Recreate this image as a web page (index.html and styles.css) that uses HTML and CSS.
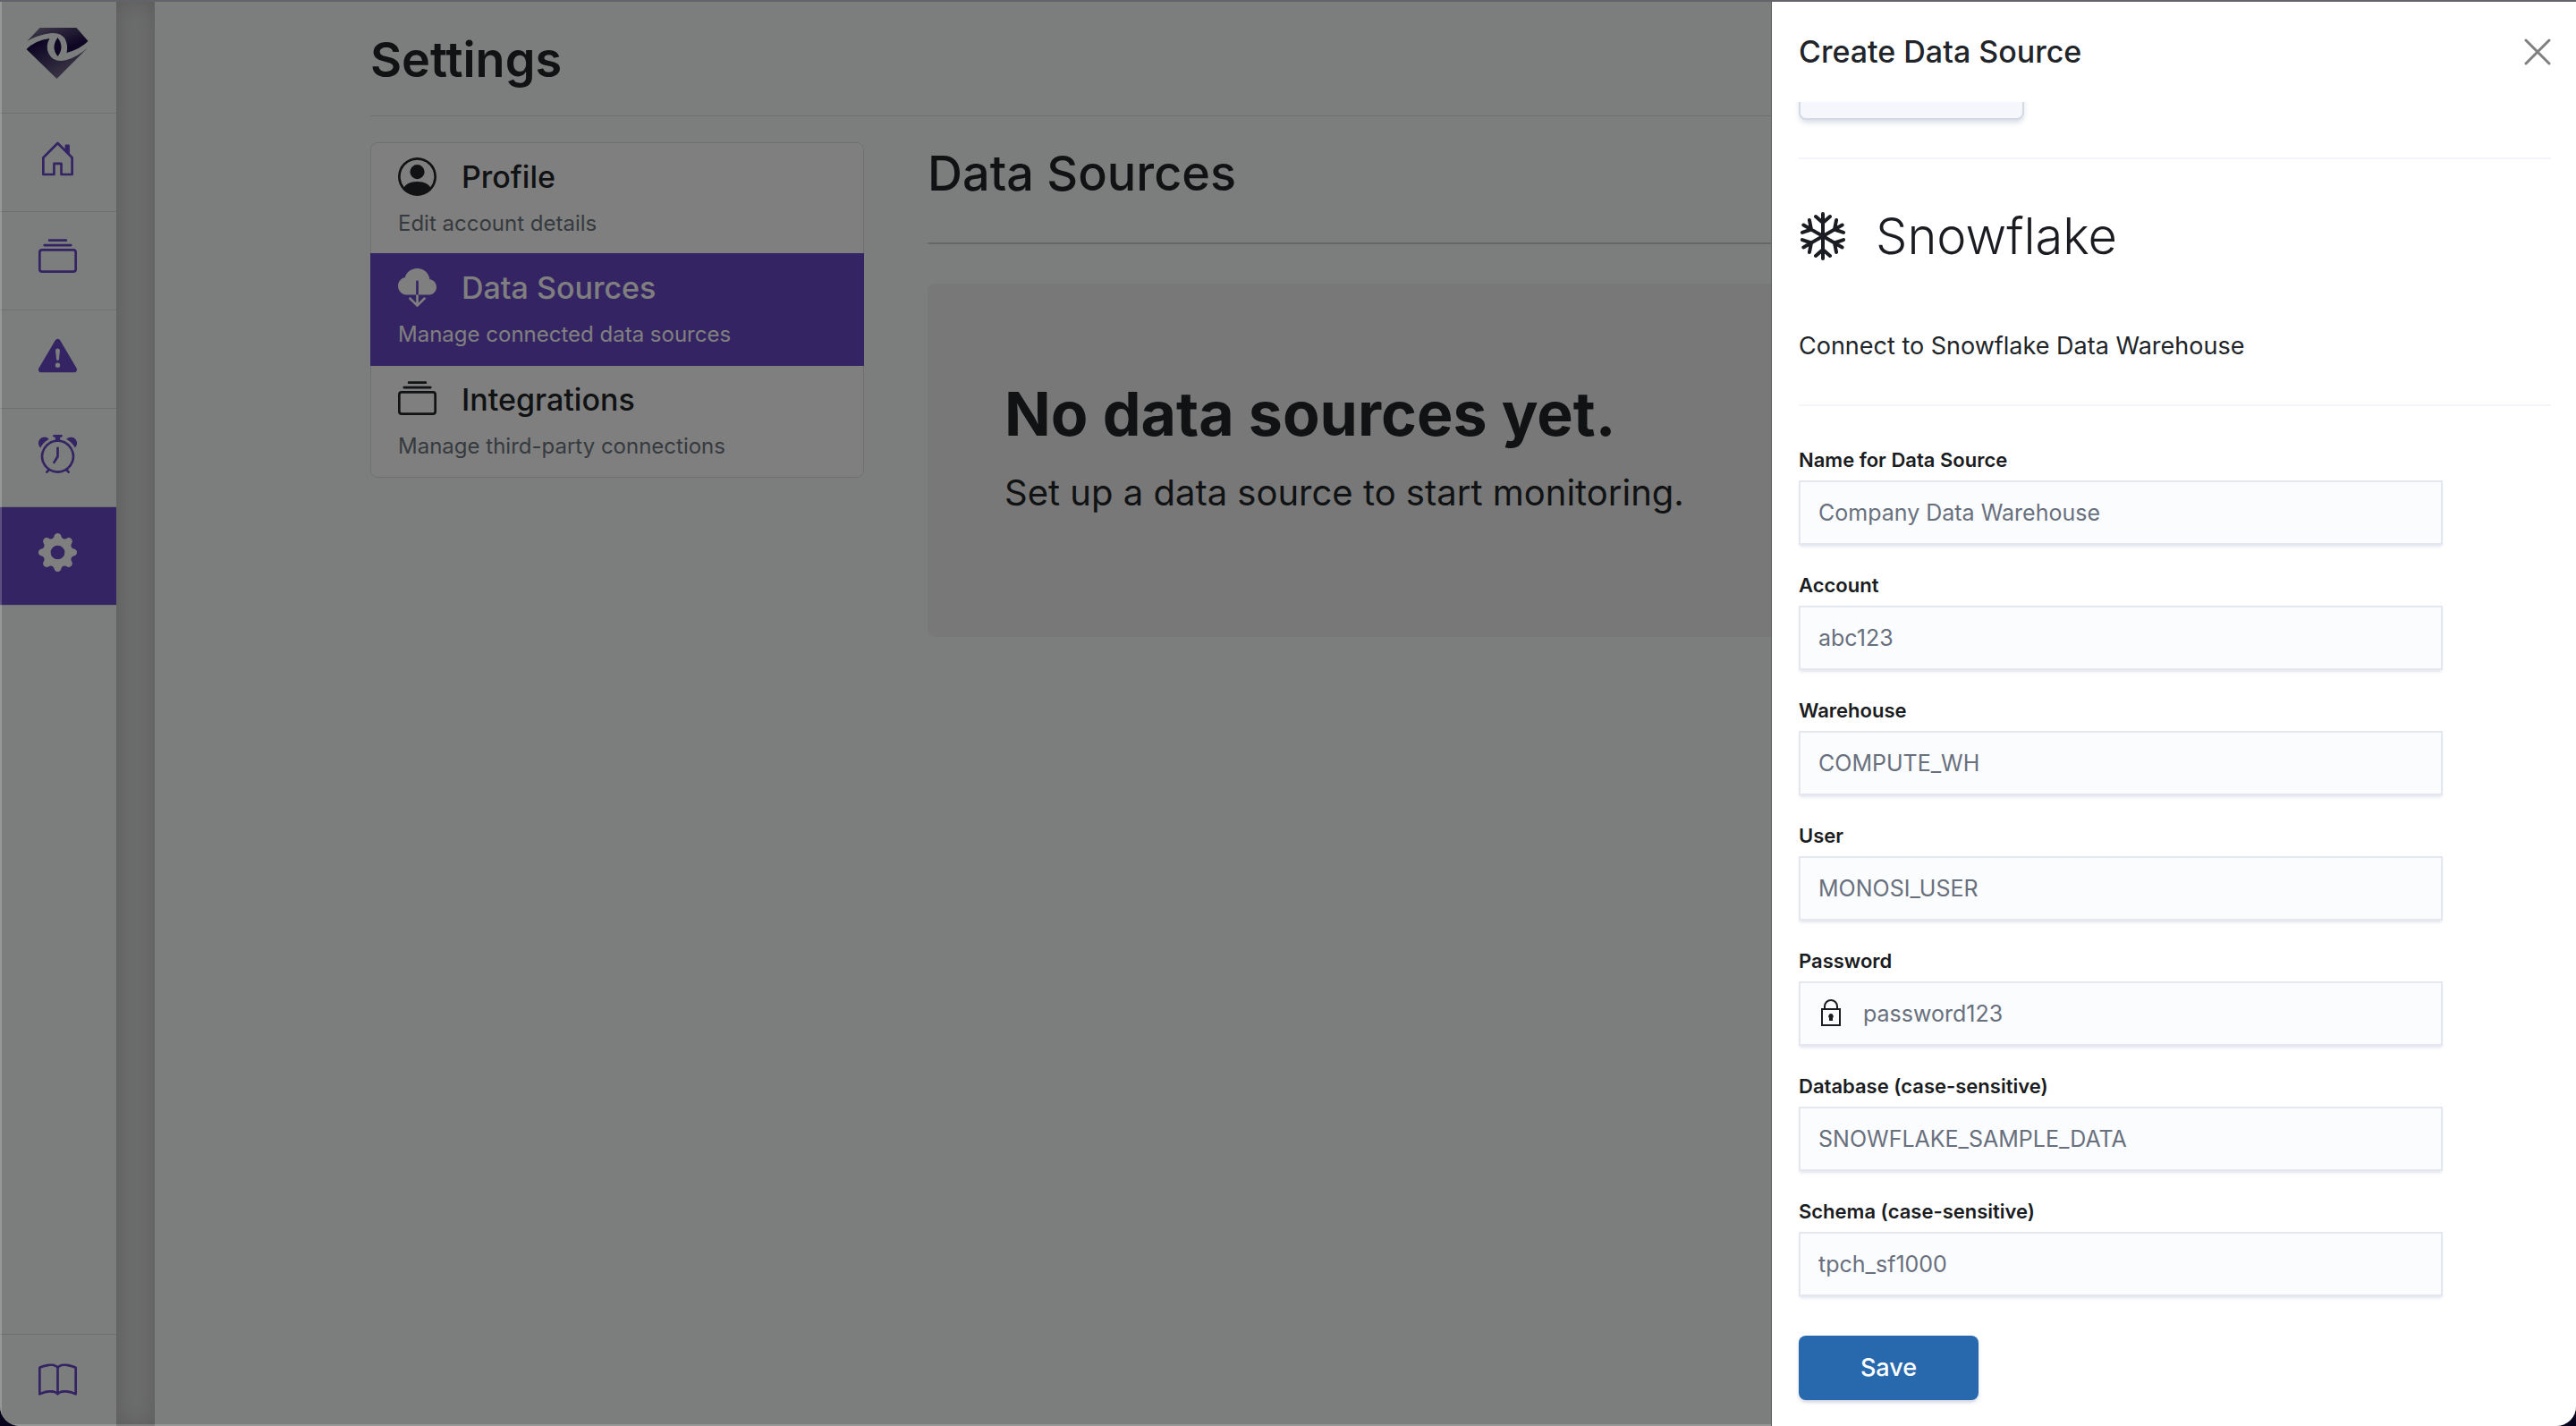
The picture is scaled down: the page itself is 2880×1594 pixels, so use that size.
FILE: index.html
```html
<!DOCTYPE html>
<html lang="en">
<head>
<meta charset="utf-8">
<title>Settings</title>
<link rel="stylesheet" href="styles.css">
</head>
<body>
<svg class="sprite" aria-hidden="true">
  <symbol id="collection" viewBox="0 0 16 16"><path d="M2.5 3.5a.5.5 0 0 1 0-1h11a.5.5 0 0 1 0 1h-11zm2-2a.5.5 0 0 1 0-1h7a.5.5 0 0 1 0 1h-7zM0 13a1.5 1.5 0 0 0 1.5 1.5h13A1.5 1.5 0 0 0 16 13V6a1.5 1.5 0 0 0-1.5-1.5h-13A1.5 1.5 0 0 0 0 6v7zm1.5.5A.5.5 0 0 1 1 13V6a.5.5 0 0 1 .5-.5h13a.5.5 0 0 1 .5.5v7a.5.5 0 0 1-.5.5h-13z"/></symbol>
</svg>
<div class="window">
  <nav class="sidebar" aria-label="Main">
    <a class="logo" href="#" aria-label="Home page">
      <svg viewBox="0 0 70 57">
        <defs>
          <linearGradient id="gem-top" x1="0" y1="0" x2="1" y2="1"><stop offset="0" stop-color="#8a8098"/><stop offset=".3" stop-color="#5a4d78"/><stop offset=".75" stop-color="#1c0d48"/></linearGradient>
          <linearGradient id="gem-bottom" x1="0" y1="0" x2="1" y2="1"><stop offset=".15" stop-color="#1c0d48"/><stop offset=".5" stop-color="#4f4270"/><stop offset=".85" stop-color="#80758f"/></linearGradient>
        </defs>
        <path fill="url(#gem-top)" d="M15 0H56L69 15Q60 24 45 28Q47 20 43 12Q38 5 28 6Q12 8 1 15Z"/>
        <path fill="url(#gem-bottom)" d="M0 24Q10 14 26 12Q21 20 25 29Q31 40 45 36Q58 32 69 22L34 57Z"/>
        <path fill="#1c0d48" d="M35 11Q43 22 35 32Q27 22 35 11Z"/>
      </svg>
    </a>
    <a class="nav-item" href="#" aria-label="Home"><svg class="icon" viewBox="0 0 16 16"><path d="M8.354 1.146a.5.5 0 0 0-.708 0l-6 6A.5.5 0 0 0 1.5 7.5v7a.5.5 0 0 0 .5.5h4.5a.5.5 0 0 0 .5-.5v-4h2v4a.5.5 0 0 0 .5.5H14a.5.5 0 0 0 .5-.5v-7a.5.5 0 0 0-.146-.354L13 5.793V2.5a.5.5 0 0 0-.5-.5h-1a.5.5 0 0 0-.5.5v1.293L8.354 1.146zM2.5 14V7.707l5.5-5.5 5.5 5.5V14H10v-4a.5.5 0 0 0-.5-.5h-3a.5.5 0 0 0-.5.5v4H2.5z"/></svg></a>
    <a class="nav-item" href="#" aria-label="Monitors"><svg class="icon"><use href="#collection"/></svg></a>
    <a class="nav-item" href="#" aria-label="Issues"><svg class="icon" viewBox="0 0 16 16"><path d="M8.982 1.566a1.13 1.13 0 0 0-1.96 0L.165 13.233c-.457.778.091 1.767.98 1.767h13.713c.889 0 1.438-.99.98-1.767L8.982 1.566zM8 5c.535 0 .954.462.9.995l-.35 3.507a.552.552 0 0 1-1.1 0L7.1 5.995A.905.905 0 0 1 8 5zm.002 6a1 1 0 1 1 0 2 1 1 0 0 1 0-2z"/></svg></a>
    <a class="nav-item" href="#" aria-label="Schedules"><svg class="icon" viewBox="0 0 16 16"><path d="M8.5 5.5a.5.5 0 0 0-1 0v3.362l-1.429 2.38a.5.5 0 1 0 .858.515l1.5-2.5A.5.5 0 0 0 8.5 9V5.5z"/><path d="M6.5 0a.5.5 0 0 0 0 1H7v1.07a7.001 7.001 0 0 0-3.273 12.474l-.602.602a.5.5 0 0 0 .707.708l.746-.746A6.97 6.97 0 0 0 8 16a6.97 6.97 0 0 0 3.422-.892l.746.746a.5.5 0 0 0 .707-.708l-.601-.602A7.001 7.001 0 0 0 9 2.07V1h.5a.5.5 0 0 0 0-1h-3zm1.038 3.018a6.093 6.093 0 0 1 .924 0 6 6 0 1 1-.924 0zM0 3.5c0 .753.333 1.429.86 1.887A8.035 8.035 0 0 1 4.387 1.86 2.5 2.5 0 0 0 0 3.5zM13.5 1c-.753 0-1.429.333-1.887.86a8.035 8.035 0 0 1 3.527 3.527A2.5 2.5 0 0 0 13.5 1z"/></svg></a>
    <a class="nav-item nav-item-active" href="#" aria-label="Settings" aria-current="page"><svg class="icon" viewBox="0 0 16 16"><path d="M9.405 1.05c-.413-1.4-2.397-1.4-2.81 0l-.1.34a1.464 1.464 0 0 1-2.105.872l-.31-.17c-1.283-.698-2.686.705-1.987 1.987l.169.311c.446.82.023 1.841-.872 2.105l-.34.1c-1.4.413-1.4 2.397 0 2.81l.34.1a1.464 1.464 0 0 1 .872 2.105l-.17.31c-.698 1.283.705 2.686 1.987 1.987l.311-.169a1.464 1.464 0 0 1 2.105.872l.1.34c.413 1.4 2.397 1.4 2.81 0l.1-.34a1.464 1.464 0 0 1 2.105-.872l.31.17c1.283.698 2.686-.705 1.987-1.987l-.169-.311a1.464 1.464 0 0 1 .872-2.105l.34-.1c1.4-.413 1.4-2.397 0-2.81l-.34-.1a1.464 1.464 0 0 1-.872-2.105l.17-.31c.698-1.283-.705-2.686-1.987-1.987l-.311.169a1.464 1.464 0 0 1-2.105-.872l-.1-.34zM8 10.93a2.929 2.929 0 1 1 0-5.86 2.929 2.929 0 0 1 0 5.858z"/></svg></a>
    <a class="nav-docs" href="#" aria-label="Documentation"><svg class="icon" viewBox="0 0 16 16"><path d="M1 2.828c.885-.37 2.154-.769 3.388-.893 1.33-.134 2.458.063 3.112.752v9.746c-.935-.53-2.12-.603-3.213-.493-1.18.12-2.37.461-3.287.811V2.828zm7.5-.141c.654-.689 1.782-.886 3.112-.752 1.234.124 2.503.523 3.388.893v9.923c-.918-.35-2.107-.692-3.287-.81-1.094-.111-2.278-.039-3.213.492V2.687zM8 1.783C7.015.936 5.587.81 4.287.94c-1.514.153-3.042.672-3.994 1.105A.5.5 0 0 0 0 2.5v11a.5.5 0 0 0 .707.455c.882-.4 2.303-.881 3.68-1.02 1.409-.142 2.59.087 3.223.877a.5.5 0 0 0 .78 0c.633-.79 1.814-1.019 3.222-.877 1.378.139 2.8.62 3.681 1.02A.5.5 0 0 0 16 13.5v-11a.5.5 0 0 0-.293-.455c-.952-.433-2.48-.952-3.994-1.105C10.413.809 8.985.936 8 1.783z"/></svg></a>
  </nav>
  <div class="gutter"></div>
  <main class="page">
    <h1 class="page-title">Settings</h1>
    <div class="page-body">
      <nav class="menu" aria-label="Settings sections">
        <a class="menu-item" href="#">
          <span class="menu-title"><svg class="icon" viewBox="0 0 16 16"><path d="M11 6a3 3 0 1 1-6 0 3 3 0 0 1 6 0z"/><path fill-rule="evenodd" d="M0 8a8 8 0 1 1 16 0A8 8 0 0 1 0 8zm8-7a7 7 0 0 0-5.468 11.37C3.242 11.226 4.805 10 8 10s4.757 1.225 5.468 2.37A7 7 0 0 0 8 1z"/></svg>Profile</span>
          <span class="menu-text">Edit account details</span>
        </a>
        <a class="menu-item menu-item-active" href="#" aria-current="page">
          <span class="menu-title"><svg class="icon" viewBox="0 0 16 16"><path d="M8 0a5.53 5.53 0 0 0-3.594 1.342c-.766.66-1.321 1.52-1.464 2.383C1.266 4.095 0 5.555 0 7.318 0 9.366 1.708 11 3.781 11H7.5V5.5a.5.5 0 0 1 1 0V11h4.188C14.502 11 16 9.57 16 7.773c0-1.636-1.242-2.969-2.834-3.194C12.923 1.999 10.69 0 8 0zm-.354 15.854a.5.5 0 0 0 .708 0l3-3a.5.5 0 0 0-.708-.708L8.5 14.293V11h-1v3.293l-2.146-2.147a.5.5 0 0 0-.708.708l3 3z"/></svg>Data Sources</span>
          <span class="menu-text">Manage connected data sources</span>
        </a>
        <a class="menu-item" href="#">
          <span class="menu-title"><svg class="icon"><use href="#collection"/></svg>Integrations</span>
          <span class="menu-text">Manage third-party connections</span>
        </a>
      </nav>
      <section class="content">
        <h2 class="content-title">Data Sources</h2>
        <div class="empty">
          <h3 class="empty-title">No data sources yet.</h3>
          <p class="empty-text">Set up a data source to start monitoring.</p>
        </div>
      </section>
    </div>
  </main>
  <div class="backdrop"></div>
  <aside class="drawer" role="dialog" aria-labelledby="drawer-title">
    <header class="drawer-header">
      <h2 class="drawer-title" id="drawer-title">Create Data Source</h2>
      <button class="close" type="button" aria-label="Close"><svg viewBox="0 0 30 30"><path d="M2 2L28 28M28 2L2 28"/></svg></button>
    </header>
    <div class="drawer-body">
      <button class="back" type="button" aria-label="Back"></button>
      <div class="source">
        <svg class="flake" viewBox="-27 -27 54 54">
          <defs><path id="arm" d="M0 0V-25M0 -15L-8 -22M0 -15L8 -22"/></defs>
          <use href="#arm"/><use href="#arm" transform="rotate(60)"/><use href="#arm" transform="rotate(120)"/><use href="#arm" transform="rotate(180)"/><use href="#arm" transform="rotate(240)"/><use href="#arm" transform="rotate(300)"/>
        </svg>
        <h3 class="source-name">Snowflake</h3>
      </div>
      <p class="source-text">Connect to Snowflake Data Warehouse</p>
      <form class="form">
        <div class="field"><label for="name">Name for Data Source</label><input id="name" type="text" placeholder="Company Data Warehouse"></div>
        <div class="field"><label for="account">Account</label><input id="account" type="text" placeholder="abc123"></div>
        <div class="field"><label for="warehouse">Warehouse</label><input id="warehouse" type="text" placeholder="COMPUTE_WH"></div>
        <div class="field"><label for="user">User</label><input id="user" type="text" placeholder="MONOSI_USER"></div>
        <div class="field field-locked"><label for="password">Password</label><input id="password" type="password" placeholder="password123"><svg class="lock" viewBox="0 0 24 30"><path class="lock-line" d="M2 11H22V29H2ZM5 11V8a7 7 0 0 1 14 0V11"/><path d="M12 16a3 3 0 0 1 2 5V24H10V21A3 3 0 0 1 12 16Z"/></svg></div>
        <div class="field"><label for="database">Database (case-sensitive)</label><input id="database" type="text" placeholder="SNOWFLAKE_SAMPLE_DATA"></div>
        <div class="field"><label for="schema">Schema (case-sensitive)</label><input id="schema" type="text" placeholder="tpch_sf1000"></div>
        <button class="save" type="submit">Save</button>
      </form>
    </div>
  </aside>
</div>
</body>
</html>
```

FILE: styles.css
```css
* {
  box-sizing: border-box;
}

body {
  margin: 0;
  background: #08031c;
  color: #212529;
  font-family: Inter, "Liberation Sans", sans-serif;
}

h1, h2, h3, p {
  margin: 0;
}

a {
  color: inherit;
  text-decoration: none;
}

.sprite {
  position: absolute;
  width: 0;
  height: 0;
}

.window {
  position: relative;
  display: flex;
  min-height: 100vh;
  overflow: hidden;
  border-top: 2px solid #63636b;
  border-radius: 0 0 22px 22px;
  background: #f8fdfa;
}

.icon {
  width: 43px;
  height: 43px;
  flex: none;
  fill: currentColor;
}

/* Sidebar */

.sidebar {
  display: flex;
  flex-direction: column;
  width: 130px;
  flex: none;
  color: #6a48c6;
}

.logo {
  height: 125px;
  padding: 29px 0 0 29px;
  border-bottom: 1px solid #dde1de;
}

.logo svg {
  width: 71px;
  height: 57px;
}

.nav-item {
  display: flex;
  align-items: center;
  justify-content: center;
  height: 110px;
  padding: 0 2px 8px 0;
  border-bottom: 1px solid #dde1de;
}

.nav-item-active {
  background: #6a48c6;
  color: #fff;
}

.nav-docs {
  display: flex;
  align-items: center;
  justify-content: center;
  height: 103px;
  padding-right: 2px;
  margin-top: auto;
  border-top: 1px solid #dde1de;
}

.gutter {
  width: 43px;
  flex: none;
  background: #d8dcd9;
  box-shadow: inset 0 0 26px #b4b4b4;
}

/* Page */

.page {
  flex: 1;
  padding: 28px 241px;
}

.page-title {
  padding-bottom: 25px;
  border-bottom: 1px solid #dde1de;
  margin-bottom: 29px;
  font-size: 54px;
  font-weight: 600;
  line-height: 74px;
}

.page-body {
  display: flex;
  align-items: flex-start;
  gap: 71px;
}

.menu {
  width: 552px;
  flex: none;
  border: 1px solid #dde1de;
  border-radius: 8px;
  background: #fff;
}

.menu-item {
  display: block;
  padding: 16px 30px 12px;
}

.menu-item-active {
  margin: -1px -1px 0;
  padding: 17px 31px 13px;
  background: #6a48c6;
  color: #fff;
}

.menu-title {
  display: flex;
  align-items: center;
  gap: 28px;
  font-size: 34px;
  font-weight: 500;
  line-height: 43px;
}

.menu-text {
  display: block;
  padding-top: 8px;
  color: #6c757d;
  font-size: 24px;
  line-height: 45px;
}

.menu-item-active .menu-text {
  color: #fff;
}

.content {
  flex: 1;
}

.content-title {
  padding-bottom: 42px;
  border-bottom: 2px solid #ced2cf;
  margin-bottom: 44px;
  font-size: 54px;
  font-weight: 500;
  line-height: 70px;
}

.empty {
  padding: 96px 86px;
  border-radius: 8px;
  background: #f1f1f1;
}

.empty-title {
  padding-bottom: 8px;
  font-size: 68px;
  font-weight: 700;
  line-height: 98px;
}

.empty-text {
  padding-bottom: 34px;
  font-size: 40px;
  line-height: 63px;
}

/* Drawer */

.backdrop {
  position: absolute;
  inset: 0;
  background: rgba(0, 0, 0, .5);
  box-shadow: inset 2px -2px 0 rgba(255, 255, 255, .2);
}

.drawer {
  position: absolute;
  top: 0;
  right: 0;
  bottom: 0;
  display: flex;
  flex-direction: column;
  width: 899px;
  max-width: 100%;
  background: #fff;
  box-shadow: -1px 0 0 #5c5e5d;
}

.drawer-header {
  display: flex;
  align-items: center;
  justify-content: space-between;
  height: 112px;
  flex: none;
  padding: 0 28px 0 30px;
}

.drawer-title {
  font-size: 34px;
  font-weight: 500;
  line-height: 54px;
}

.close {
  width: 30px;
  height: 30px;
  padding: 0;
  border: 0;
  background: none;
}

.close svg {
  display: block;
  fill: none;
  stroke: #7f7f7f;
  stroke-width: 3;
  stroke-linecap: round;
}

.drawer-body {
  flex: 1;
  overflow: hidden;
  padding: 0 28px 0 30px;
}

/* The body is scrolled so that the back button is partly out of view */
.back {
  display: block;
  width: 252px;
  height: 72px;
  margin: -52px 0 42px;
  border: 2px solid #d3dae6;
  border-radius: 8px;
  background: #f5f7fc;
  box-shadow: 0 4px 6px -1px rgba(60, 80, 130, .2);
}

.source {
  display: flex;
  align-items: center;
  gap: 32px;
  height: 174px;
  border-top: 2px solid #f3f4fa;
  color: #1a1c21;
}

.flake {
  width: 54px;
  height: 54px;
  fill: none;
  stroke: currentColor;
  stroke-width: 4;
  stroke-linecap: round;
}

.source-name {
  font-size: 56px;
  font-weight: 300;
  line-height: 80px;
}

.source-text {
  padding: 16px 0 44px;
  border-bottom: 2px solid #f3f4fa;
  font-size: 27px;
  line-height: 42px;
}

.form {
  display: grid;
  gap: 32px;
  max-width: 720px;
  padding-top: 47px;
}

.field {
  position: relative;
}

.field label {
  display: block;
  padding-bottom: 10px;
  color: #1a1c21;
  font-size: 22px;
  font-weight: 600;
  line-height: 26px;
}

.field input {
  display: block;
  width: 100%;
  height: 72px;
  padding: 0 20px;
  border: 2px solid #e4e6f0;
  border-radius: 0;
  background: #fbfcfe;
  box-shadow: 0 3px 3px -1px rgba(60, 70, 130, .14);
  font: 400 25px/36px Inter, "Liberation Sans", sans-serif;
}

.field input::placeholder {
  color: #69707d;
  opacity: 1;
}

.field-locked input {
  padding-left: 70px;
}

.lock {
  position: absolute;
  left: 24px;
  bottom: 22px;
  width: 24px;
  height: 30px;
  fill: #1a1c21;
}

.lock-line {
  fill: none;
  stroke: #1a1c21;
  stroke-width: 2;
}

.save {
  width: 201px;
  height: 72px;
  margin-top: 12px;
  border: 0;
  border-radius: 8px;
  background: #2869ae;
  box-shadow: 0 3px 4px -1px rgba(60, 70, 130, .3);
  color: #fff;
  font: 500 27px/42px Inter, "Liberation Sans", sans-serif;
}
```
